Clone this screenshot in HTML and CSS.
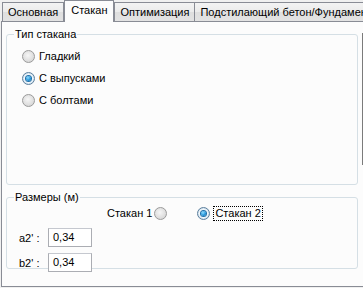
FILE: index.html
```html
<!doctype html>
<html>
<head>
  <title>Стакан</title>
  <link rel="stylesheet" href="styles.css">
</head>
<body>

<div class="tabs">
  <div class="tab">Основная</div>
  <div class="tab selected">Стакан</div>
  <div class="tab">Оптимизация</div>
  <div class="tab">Подстилающий бетон/Фундамент</div>
</div>

<div class="panel">
  <div class="groups">

    <!-- Тип стакана -->
    <fieldset class="group group-type">
      <legend>Тип стакана</legend>
      <div class="radio-list">
        <label class="radio-item"><span class="radio"></span>Гладкий</label>
        <label class="radio-item"><span class="radio checked"></span>С выпусками</label>
        <label class="radio-item"><span class="radio"></span>С болтами</label>
      </div>
    </fieldset>

    <!-- Размеры -->
    <fieldset class="group group-size">
      <legend>Размеры (м)</legend>
      <div class="cup-row">
        <label class="radio-item right">Стакан 1<span class="radio"></span></label>
        <label class="radio-item"><span class="radio checked"></span><span class="focus">Стакан 2</span></label>
      </div>
      <div class="field-row">
        <span class="field-label">a2' :</span>
        <span class="field-box">0,34</span>
      </div>
      <div class="field-row">
        <span class="field-label">b2' :</span>
        <span class="field-box">0,34</span>
      </div>
    </fieldset>

  </div>
  <div class="scroll-edge"></div>
</div>

</body>
</html>
```

FILE: styles.css
```css
body {
  margin: 0;
  padding-left: 1px;
  background: #f0f0f0;
  font-family: 'Liberation Sans', Arial, sans-serif;
  font-size: 11px;
  color: #000;
  overflow: hidden;
  width: 363px;
  height: 288px;
}

.tabs {
  display: flex;
  align-items: flex-end;
  height: 21px;
  padding-left: 1px;
}

.tab {
  height: 18px;
  line-height: 19px;
  padding: 0 5px;
  border: 1px solid #898c95;
  border-bottom: none;
  margin-right: -1px;
  background: linear-gradient(to bottom, #f3f3f3, #ebebeb 50%, #dedede 50%, #e3e3e3);
  white-space: nowrap;
}

.tab.selected {
  position: relative;
  z-index: 1;
  height: 21px;
  line-height: 18px;
  margin-bottom: -1px;
  margin-left: 1px;
  margin-right: 0;
  padding: 0 6px;
  background: #fcfcfc;
}

.panel {
  display: flex;
  width: 400px;
  height: 264px;
  border: 1px solid #898c95;
  background: #fcfcfc;
  padding-left: 4px;
  box-sizing: content-box;
}

.groups {
  width: 352px;
  display: flex;
  flex-direction: column;
}

.scroll-edge {
  width: 2px;
  height: 132px;
  margin-top: 11px;
  margin-left: 4px;
  background: #7b7b7b;
}

.group {
  margin: 0;
  border: 1px solid #d5dfe5;
  border-radius: 3px;
  padding: 0 0 0 7px;
}

.group legend {
  padding: 0 1px;
  line-height: 13px;
}

.group-type {
  margin-top: 6px;
  height: 155px;
}

.group-size {
  margin-top: 6px;
  height: 76px;
}

.radio-list {
  display: flex;
  flex-direction: column;
  gap: 9px;
  padding: 9px 0 0 8px;
}

.radio-item {
  display: flex;
  align-items: center;
  gap: 4px;
  height: 13px;
  line-height: 13px;
}

.radio-item.right {
  gap: 2px;
}

.radio {
  width: 11px;
  height: 11px;
  border: 1px solid #9a9a9a;
  border-radius: 50%;
  background: radial-gradient(circle at 45% 40%, #f6f6f6 0%, #e0e0e0 55%, #cfcfcf 100%);
  display: flex;
  align-items: center;
  justify-content: center;
  flex-shrink: 0;
}

.radio.checked {
  border-color: #5d7f9c;
  background: radial-gradient(circle, #ffffff 45%, #c7dcec 75%, #aac4da 100%);
}

.radio.checked::after {
  content: "";
  width: 5px;
  height: 5px;
  border-radius: 50%;
  background: radial-gradient(circle at 40% 35%, #8fdcff 0%, #1b8fd6 60%, #0c5e9d 100%);
  box-shadow: 0 0 0 1px #1f6fa8;
}

.focus {
  outline: 1px dotted #000;
  outline-offset: 0;
  padding: 0 1px;
}

.cup-row {
  display: flex;
  gap: 30px;
  padding: 3px 0 0 93px;
}

.field-row {
  display: flex;
  align-items: center;
  gap: 5px;
  padding-left: 5px;
  margin-top: 6px;
}

.cup-row + .field-row {
  margin-top: 8px;
}

.field-label {
  width: 24px;
  white-space: nowrap;
}

.field-box {
  width: 38px;
  height: 17px;
  line-height: 17px;
  padding-left: 4px;
  border: 1px solid #abadb3;
  border-top-color: #c5c8cf;
  background: #fff;
}
```
